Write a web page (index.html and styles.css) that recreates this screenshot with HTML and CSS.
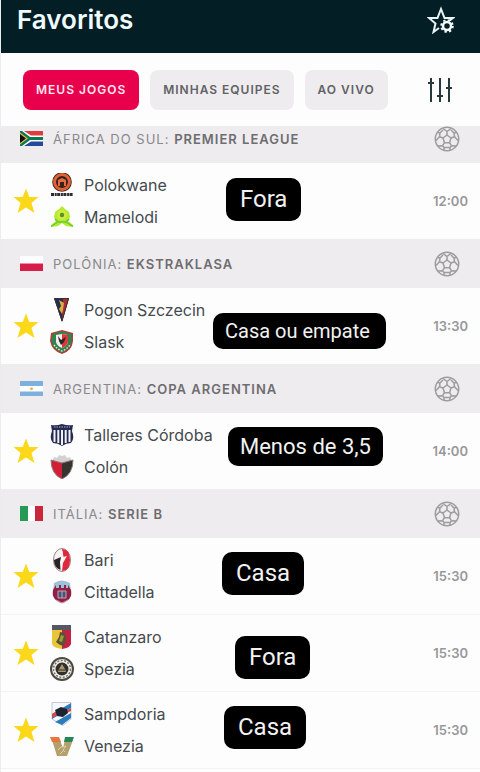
FILE: index.html
```html
<!DOCTYPE html>
<html lang="pt-BR">
  <head>
    <meta charset="UTF-8" />
    <meta name="viewport" content="width=device-width, initial-scale=1.0" />
    <title>Favoritos</title>
    <link rel="stylesheet" href="styles.css">
  </head>

  <body>
    <!-- shared icons -->
    <svg class="defs" width="0" height="0" aria-hidden="true">
      <symbol id="star" viewBox="0 0 26 26">
        <path fill="#fbd91a" d="M13 0.500l3.300 8.500h9.200l-7 6 3 10L13 19.500 4.500 25l3-10-7-6h9.200z" />
      </symbol>
      <symbol id="ball" viewBox="0 0 26 26">
        <g fill="none" stroke="#9d9c9f" stroke-width="1.500" stroke-linejoin="round">
          <circle cx="13" cy="13" r="11.700" />
          <path d="M13 9l4 3-1.500 4.700h-5L9 12z" />
          <path d="M13 9V5.500M17 12l3.500-1.200M15.500 16.700l2 3M10.500 16.700l-2 3M9 12l-3.500-1.200" />
          <path d="M13 5.500L9 2.500M13 5.500L17 2.500M5.500 10.800L6 7 3.500 6.500M20.500 10.800L20 7l2.500-.5M6 7l3-3M20 7l-3-3" />
          <path d="M5.500 10.800L2 14.500M20.500 10.800L24 14.500M8.500 19.700L4 20M17.500 19.700L22 20M8.500 19.700L10 21.500h6l1.500-1.800M10 21.500v2.700M16 21.500v2.700" />
        </g>
      </symbol>
    </svg>

    <div class="app">
      <header class="header">
        <h1>Favoritos</h1>
        <button class="icon-btn" aria-label="Configurar favoritos">
          <svg width="28" height="28" viewBox="0 0 28 28">
            <path fill="none" stroke="#e6f4f8" stroke-width="2" stroke-linejoin="miter" d="M12 22l-5.500 4 2-8.500L2 12h8.500L14 3l3.500 9H26l-4 3" />
            <circle cx="20" cy="20" r="4" fill="none" stroke="#f4fbfd" stroke-width="2.500" />
            <circle cx="20" cy="20" r="5.800" fill="none" stroke="#f4fbfd" stroke-width="2" stroke-dasharray="2.300 2.255" />
          </svg>
        </button>
      </header>

      <nav class="tabs">
        <button class="tab active">MEUS JOGOS</button>
        <button class="tab">MINHAS EQUIPES</button>
        <button class="tab">AO VIVO</button>
        <button class="icon-btn filter" aria-label="Filtros">
          <svg width="28" height="28" viewBox="0 0 28 28">
            <path fill="none" stroke="#27383b" stroke-width="2" d="M4 2v24M13 2v24M22 2v24M1 7h6M10 20h6M19 12h6" />
          </svg>
        </button>
      </nav>

      <main class="list">
        <section>
          <div class="league">
            <svg class="flag" viewBox="0 0 23 15">
              <path fill="#de3d40" d="M0 0h23v5H0z" />
              <path fill="#244a9c" d="M0 10h23v5H0z" />
              <path fill="#fff" d="M0 0h4l7 4.500h12v6H11L4 15H0z" />
              <path fill="#087a50" d="M0 0h2l8 6h13v3H10l-8 6H0z" />
              <path fill="#e9b84a" d="M0 1.500l8 6-8 6z" />
              <path fill="#111" d="M0 3l6 4.500L0 12z" />
            </svg>
            <h2>ÁFRICA DO SUL: <b>PREMIER LEAGUE</b></h2>
            <svg class="ball"><use href="#ball" /></svg>
          </div>
          <article class="match">
            <button class="star" aria-label="Remover dos favoritos"><svg><use href="#star" /></svg></button>
            <div class="teams">
              <div class="team">
                <svg viewBox="0 0 24 24">
                  <circle cx="12" cy="9" r="9.800" fill="#3b211c" />
                  <circle cx="12" cy="9" r="7.500" fill="none" stroke="#df6136" stroke-width="3" />
                  <path fill="#e56b42" d="M8 7l4-2 4 2v6h-2V9h-4v4H8z" />
                  <path stroke="#302b2c" stroke-width="3" stroke-dasharray="3 .7 2 .5" d="M1 21.500h22" />
                </svg>
                <span>Polokwane</span>
              </div>
              <div class="team">
                <svg viewBox="0 0 24 24">
                  <path fill="#b2ec2e" d="M12 1l3 3 4 3 1 5-2 4 5 4v2l-7-1-4-3-4 3-7 1v-2l5-4-2-4 1-5 4-3z" />
                  <circle cx="12" cy="10" r="5" fill="#d3ea3c" />
                  <circle cx="12" cy="10" r="2.200" fill="#4c972f" />
                  <path fill="#fefdfe" d="M9 22l3-3 3 3z" />
                  <path fill="none" stroke="#6cc53b" stroke-width="1.500" d="M1 21.500l6-4M23 21.500l-6-4M5 14l3 3h8l3-3" />
                </svg>
                <span>Mamelodi</span>
              </div>
            </div>
            <time>12:00</time>
            <div class="tip tip-polokwane">Fora</div>
          </article>
        </section>

        <section>
          <div class="league">
            <svg class="flag" viewBox="0 0 23 15">
              <path fill="#fff" d="M0 0h23v8H0z" />
              <path fill="#d51f49" d="M0 7.500h23V15H0z" />
            </svg>
            <h2>POLÔNIA: <b>EKSTRAKLASA</b></h2>
            <svg class="ball"><use href="#ball" /></svg>
          </div>
          <article class="match">
            <button class="star" aria-label="Remover dos favoritos"><svg><use href="#star" /></svg></button>
            <div class="teams">
              <div class="team">
                <svg viewBox="0 0 24 24">
                  <path fill="#1f2e52" d="M4 0h15l-7 24z" />
                  <path fill="#a92c35" d="M13 0h6l-7 24z" />
                  <path fill="#dcae3e" d="M9 2l5 3-1 7-1 4-3-5 2-3z" />
                  <path fill="none" stroke="#393132" d="M4.500.5h14L12 23z" />
                </svg>
                <span>Pogon Szczecin</span>
              </div>
              <div class="team">
                <svg viewBox="0 0 24 24">
                  <path fill="#a74334" d="M12 0l11 3v8q-1 10-11 13Q2 21 0 11l1-8z" />
                  <path fill="#308451" d="M12 1.500L21.500 4v7q-1 8-9.500 11.500Q3 19 1.500 11l1-7z" />
                  <path fill="#f3eeee" d="M6 5l6-1 6 1v7q-2 5-6 6-5-2-6-6z" />
                  <path fill="#df3738" d="M12 4l6 1v7q-2 5-6 6z" />
                  <path fill="#292526" d="M8 6l3 4 5-3-2 5-3 3-2-4z" />
                  <path stroke="#dce8d5" stroke-width="1.500" stroke-dasharray="1.500 1.500" fill="none" d="M4 15q3 4 8 6 5-2 8-6" />
                </svg>
                <span>Slask</span>
              </div>
            </div>
            <time>13:30</time>
            <div class="tip tip-pogon">Casa ou empate</div>
          </article>
        </section>

        <section>
          <div class="league">
            <svg class="flag" viewBox="0 0 23 15">
              <path fill="#fff" d="M0 0h23v15H0z" />
              <path fill="#7eb0dd" d="M0 0h23v5H0zM0 10.500h23V15H0z" />
              <circle cx="11.500" cy="7.800" r="1.500" fill="#ddb861" />
            </svg>
            <h2>ARGENTINA: <b>COPA ARGENTINA</b></h2>
            <svg class="ball"><use href="#ball" /></svg>
          </div>
          <article class="match">
            <button class="star" aria-label="Remover dos favoritos"><svg><use href="#star" /></svg></button>
            <div class="teams">
              <div class="team">
                <svg viewBox="0 0 24 24">
                  <path fill="#242b52" d="M1 2q5 1 11-1 6 2 11 1l-1 6q3 8-1 12-5 0-9 3-4-3-9-3-4-4-1-12z" />
                  <path stroke="#f1f1f6" stroke-width="2" d="M4.500 7v12M8.300 7v13M12 7v15M15.700 7v13M19.500 7v12" />
                  <path stroke="#a8abc3" stroke-dasharray="1.500 1" d="M4 4h16" />
                </svg>
                <span>Talleres Córdoba</span>
              </div>
              <div class="team">
                <svg viewBox="0 0 24 24">
                  <path fill="#d5d1d2" d="M2 6l2-4 3 1 2-3 3 1 3-1 2 3 3-1 2 4-10 4z" />
                  <path fill="#d31f35" d="M1 5l11 3v16Q1 19 1 5z" />
                  <path fill="#37332f" d="M23 5L12 8v16Q23 19 23 5z" />
                  <path fill="none" stroke="#8e7776" d="M1 5l11 3 11-3q0 14-11 19Q1 19 1 5z" />
                </svg>
                <span>Colón</span>
              </div>
            </div>
            <time>14:00</time>
            <div class="tip tip-talleres">Menos de 3,5</div>
          </article>
        </section>

        <section>
          <div class="league">
            <svg class="flag" viewBox="0 0 23 15">
              <path fill="#fff" d="M0 0h23v15H0z" />
              <path fill="#279b56" d="M0 0h8v15H0z" />
              <path fill="#ca263c" d="M15 0h8v15h-8z" />
            </svg>
            <h2>ITÁLIA: <b>SERIE B</b></h2>
            <svg class="ball"><use href="#ball" /></svg>
          </div>
          <article class="match">
            <button class="star" aria-label="Remover dos favoritos"><svg><use href="#star" /></svg></button>
            <div class="teams">
              <div class="team">
                <svg viewBox="0 0 24 24">
                  <ellipse cx="12" cy="12" rx="8.500" ry="11.500" fill="#f7f1f1" stroke="#9d8587" />
                  <path fill="#df293b" d="M12 1q8 0 8 11t-8 11l1-8 4-7-4 1z" />
                  <path fill="#292124" d="M4 12l7-3-1 5 1 8q-7-2-7-10z" />
                  <path fill="none" stroke="#fff" d="M12 3l1 6-2 5v8" />
                </svg>
                <span>Bari</span>
              </div>
              <div class="team">
                <svg viewBox="0 0 24 24">
                  <path fill="#9fc2dc" d="M4 3q8-5 16 0l1 9q0 7-9 11-9-4-9-11z" />
                  <path fill="#8f2145" d="M3 10l3-5v3h3V5h2v3h3V5h2v3h2V5l3 5q2 10-9 13Q1 20 3 10z" />
                  <path fill="#3e5780" d="M8 11h8v7H8z" />
                  <path fill="none" stroke="#d3a0ad" d="M8 11h8v7H8zM12 11v7M6 20l6 3 6-3" />
                </svg>
                <span>Cittadella</span>
              </div>
            </div>
            <time>15:30</time>
            <div class="tip tip-bari">Casa</div>
          </article>
          <article class="match">
            <button class="star" aria-label="Remover dos favoritos"><svg><use href="#star" /></svg></button>
            <div class="teams">
              <div class="team">
                <svg viewBox="0 0 24 24">
                  <path fill="#e8c53a" d="M2 0h10v24Q3 23 2 19z" />
                  <path fill="#c32343" d="M12 0h9v19q-1 4-9 5z" />
                  <path fill="#555863" d="M2 0h19v5H2z" />
                  <path fill="#575233" d="M10 7l5 1 1 6-2 7-4-1-4-3 3-5z" />
                  <path fill="#9a9d3c" d="M11 10l3 1-2 6-3-1z" />
                </svg>
                <span>Catanzaro</span>
              </div>
              <div class="team">
                <svg viewBox="0 0 24 24">
                  <circle cx="12" cy="12" r="11" fill="#f0eee8" stroke="#4c4940" stroke-width="2" />
                  <circle cx="12" cy="12" r="8.500" fill="none" stroke="#77746a" stroke-width="1.500" stroke-dasharray="2 1.500" />
                  <circle cx="12" cy="12" r="6.500" fill="#312e2b" />
                  <path fill="#a59672" d="M12 7l3 5 1 3H8l1-3z" />
                  <path stroke="#312e2b" d="M9 13h6" />
                </svg>
                <span>Spezia</span>
              </div>
            </div>
            <time>15:30</time>
            <div class="tip tip-catanzaro">Fora</div>
          </article>
          <article class="match">
            <button class="star" aria-label="Remover dos favoritos"><svg><use href="#star" /></svg></button>
            <div class="teams">
              <div class="team">
                <svg viewBox="0 0 24 24">
                  <path fill="#f5f7fa" stroke="#c4c9d2" d="M2 .5h19V17l-8 6.500L2 17z" />
                  <path fill="#2d7cbc" d="M2 12L21 1v5L2 17zM5 20L21 11v5l-9 7z" />
                  <path fill="#d34a4d" d="M2 12l5-3v4l-5 3zM17 8l4-2v3l-4 2z" />
                  <path fill="#1d2330" d="M5 8l6-3 6 2 1 4-5 4-6-1z" />
                </svg>
                <span>Sampdoria</span>
              </div>
              <div class="team">
                <svg viewBox="0 0 24 24">
                  <path fill="#b3a06c" d="M2 6h8l3 8 2-8h8l-6 16H7z" />
                  <path fill="#e77643" d="M0 3h9l2 5H2z" />
                  <path fill="#25865c" d="M15 3h9l-2 5h-8z" />
                  <path fill="none" stroke="#ddd0a5" d="M8 16l3-3 5-1-3 4 2 2M10 20l3-3" />
                </svg>
                <span>Venezia</span>
              </div>
            </div>
            <time>15:30</time>
            <div class="tip tip-sampdoria">Casa</div>
          </article>
        </section>
      </main>
    </div>
  </body>
</html>
```

FILE: styles.css
```css
* {
  padding: 0;
  margin: 0;
  box-sizing: border-box;
}

body {
  font-family: Inter, "Liberation Sans", sans-serif;
  background-color: #fefdfe;
  color: #444a4d;
}

button {
  border: none;
  background: transparent;
  font-family: inherit;
  cursor: pointer;
}

svg {
  display: block;
}

.defs {
  position: absolute;
}

.app {
  min-height: 100vh;
  overflow: hidden;
  border-left: 1px solid #ececee;
}

.header {
  display: flex;
  justify-content: space-between;
  align-items: center;
  height: 53px;
  padding: 0 25px 14px 16px;
  background-color: #031f25;
  color: #f0fbfd;
}

.header h1 {
  font-size: 26px;
  line-height: 32px;
  font-weight: 600;
}

.icon-btn {
  width: 28px;
  height: 28px;
}

.tabs {
  position: relative;
  z-index: 1;
  display: flex;
  align-items: center;
  gap: 11px;
  height: 73px;
  padding: 0 25px 0 22px;
  background-color: #fefdfe;
}

.tab {
  height: 40px;
  padding: 0 13px;
  border-radius: 8px;
  background-color: #eeecef;
  color: #626164;
  font-size: 12px;
  font-weight: 600;
  letter-spacing: 1px;
  white-space: nowrap;
}

.tab.active {
  background-color: #e8004c;
  color: #ffe6ee;
}

.filter {
  margin-left: auto;
}

/* the list is scrolled a little under the tabs */
.list {
  margin-top: -12px;
}

.league {
  display: flex;
  align-items: center;
  height: 49px;
  padding: 0 20px 0 19px;
  background-color: #eeecef;
}

.flag {
  width: 23px;
  height: 15px;
  margin-right: 10px;
}

.league h2 {
  flex: 1;
  color: #89888b;
  font-size: 13px;
  font-weight: 400;
  letter-spacing: 1px;
}

.league b {
  color: #6e6d70;
  font-weight: 600;
}

.ball {
  width: 26px;
  height: 26px;
}

.match {
  position: relative;
  display: flex;
  align-items: center;
  padding: 6px 12px;
}

.match + .match {
  border-top: 1px solid #f4f2f5;
}

.list section:last-child {
  border-bottom: 1px solid #f4f2f5;
}

.star,
.star svg {
  width: 26px;
  height: 26px;
}

.teams {
  flex: 1;
  margin-left: 11px;
}

.team {
  display: flex;
  align-items: center;
  gap: 10px;
  height: 32px;
  font-size: 16px;
}

.team svg {
  width: 24px;
  height: 24px;
}

time {
  color: #98979a;
  font-size: 13px;
  font-weight: 600;
}

/* stickers placed by hand over the rows */
.tip {
  position: absolute;
  padding: 0 14px;
  border-radius: 10px;
  background-color: #000;
  color: #f2f2f2;
  font-family: Roboto, sans-serif;
  font-size: 24px;
  line-height: 43px;
  white-space: nowrap;
}

.tip-polokwane {
  left: 225px;
  top: 15px;
}

.tip-pogon {
  left: 212px;
  top: 25px;
  padding: 0 16px 0 12px;
  font-size: 20px;
  line-height: 36px;
}

.tip-talleres {
  left: 227px;
  top: 14px;
  padding: 0 12px;
  font-size: 22px;
  line-height: 39px;
}

.tip-bari {
  left: 221px;
  top: 14px;
}

.tip-catanzaro {
  left: 234px;
  top: 21px;
}

.tip-sampdoria {
  left: 223px;
  top: 14px;
}
```
